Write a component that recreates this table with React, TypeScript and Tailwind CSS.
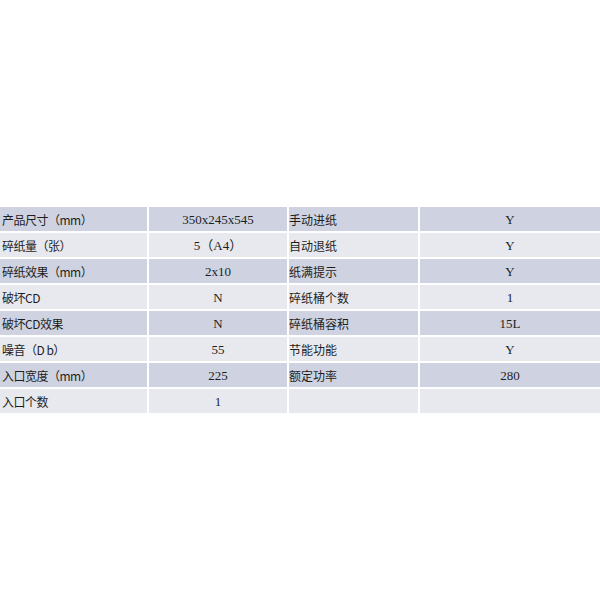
import React from 'react';

const rows: [string, string, string, string][] = [
  ['产品尺寸（mm）', '350x245x545', '手动进纸', 'Y'],
  ['碎纸量（张）', '5（A4）', '自动退纸', 'Y'],
  ['碎纸效果（mm）', '2x10', '纸满提示', 'Y'],
  ['破坏CD', 'N', '碎纸桶个数', '1'],
  ['破坏CD效果', 'N', '碎纸桶容积', '15L'],
  ['噪音（D b）', '55', '节能功能', 'Y'],
  ['入口宽度（mm）', '225', '额定功率', '280'],
  ['入口个数', '1', '', ''],
];

export default function App() {
  return (
    <div className="w-[600px] h-[600px] bg-white pt-[207px] font-['Liberation_Serif','Noto_Sans_CJK_SC',serif] text-[13px] text-[#1e1e1e]">
      <div className="grid grid-cols-[147px_138px_129px_1fr] gap-[2px]">
        {rows.map((r, i) => {
          const bg = i % 2 === 0 ? 'bg-[#cfd3e1]' : 'bg-[#e8e9ee]';
          return (
            <React.Fragment key={i}>
              <div className={`${bg} h-[24px] flex items-center pt-[2px] pl-[2px] text-[12px] font-['Noto_Sans_CJK_SC',sans-serif] tracking-[-0.5px]`}>{r[0]}</div>
              <div className={`${bg} h-[24px] flex items-center justify-center pt-[2px]`}>{r[1]}</div>
              <div className={`${bg} h-[24px] flex items-center pt-[2px] text-[12px] font-['Noto_Sans_CJK_SC',sans-serif]`}>{r[2]}</div>
              <div className={`${bg} h-[24px] flex items-center justify-center pt-[2px]`}>{r[3]}</div>
            </React.Fragment>
          );
        })}
      </div>
    </div>
  );
}
